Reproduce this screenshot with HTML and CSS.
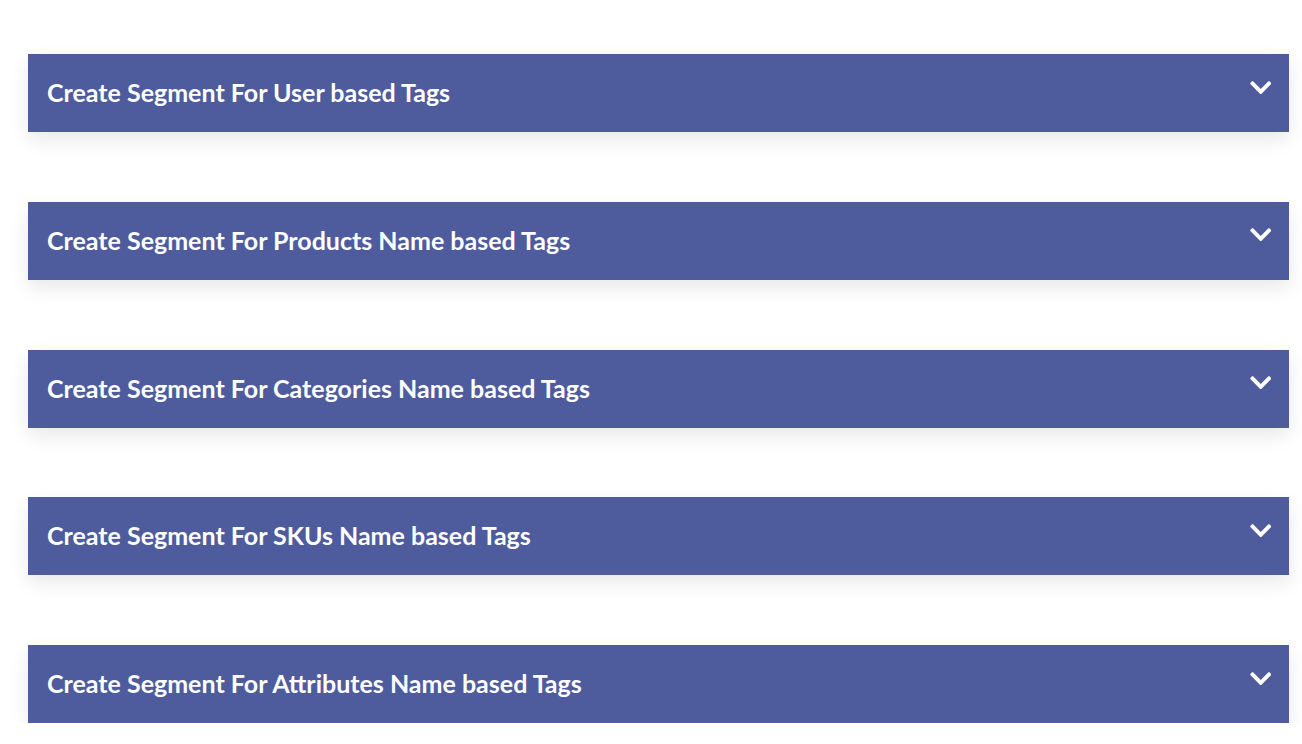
FILE: index.html
```html
<!DOCTYPE html>
<html lang="en">
<head>
    <meta charset="UTF-8">
    <meta name="viewport" content="width=device-width, initial-scale=1.0">
    <title>Segments</title>
    <link rel="stylesheet" href="styles.css">
</head>
<body>
    <div class="segments">
        <div class="seg-bar">
            <span class="seg-title">Create Segment For User based Tags</span>
            <svg class="seg-arrow" viewBox="0 118 448 276"><path d="M207.029 381.476L12.686 187.132c-9.373-9.373-9.373-24.569 0-33.941l22.667-22.667c9.357-9.357 24.522-9.375 33.901-.04L224 284.505l154.745-154.021c9.379-9.335 24.544-9.317 33.901.04l22.667 22.667c9.373 9.373 9.373 24.569 0 33.941L240.971 381.476c-9.373 9.372-24.569 9.372-33.942 0z"/></svg>
        </div>
        <div class="seg-bar">
            <span class="seg-title">Create Segment For Products Name based Tags</span>
            <svg class="seg-arrow" viewBox="0 118 448 276"><path d="M207.029 381.476L12.686 187.132c-9.373-9.373-9.373-24.569 0-33.941l22.667-22.667c9.357-9.357 24.522-9.375 33.901-.04L224 284.505l154.745-154.021c9.379-9.335 24.544-9.317 33.901.04l22.667 22.667c9.373 9.373 9.373 24.569 0 33.941L240.971 381.476c-9.373 9.372-24.569 9.372-33.942 0z"/></svg>
        </div>
        <div class="seg-bar">
            <span class="seg-title">Create Segment For Categories Name based Tags</span>
            <svg class="seg-arrow" viewBox="0 118 448 276"><path d="M207.029 381.476L12.686 187.132c-9.373-9.373-9.373-24.569 0-33.941l22.667-22.667c9.357-9.357 24.522-9.375 33.901-.04L224 284.505l154.745-154.021c9.379-9.335 24.544-9.317 33.901.04l22.667 22.667c9.373 9.373 9.373 24.569 0 33.941L240.971 381.476c-9.373 9.372-24.569 9.372-33.942 0z"/></svg>
        </div>
        <div class="seg-bar">
            <span class="seg-title">Create Segment For SKUs Name based Tags</span>
            <svg class="seg-arrow" viewBox="0 118 448 276"><path d="M207.029 381.476L12.686 187.132c-9.373-9.373-9.373-24.569 0-33.941l22.667-22.667c9.357-9.357 24.522-9.375 33.901-.04L224 284.505l154.745-154.021c9.379-9.335 24.544-9.317 33.901.04l22.667 22.667c9.373 9.373 9.373 24.569 0 33.941L240.971 381.476c-9.373 9.372-24.569 9.372-33.942 0z"/></svg>
        </div>
        <div class="seg-bar">
            <span class="seg-title">Create Segment For Attributes Name based Tags</span>
            <svg class="seg-arrow" viewBox="0 118 448 276"><path d="M207.029 381.476L12.686 187.132c-9.373-9.373-9.373-24.569 0-33.941l22.667-22.667c9.357-9.357 24.522-9.375 33.901-.04L224 284.505l154.745-154.021c9.379-9.335 24.544-9.317 33.901.04l22.667 22.667c9.373 9.373 9.373 24.569 0 33.941L240.971 381.476c-9.373 9.372-24.569 9.372-33.942 0z"/></svg>
        </div>
    </div>
</body>
</html>
```

FILE: styles.css
```css
body {
    margin: 0;
    padding: 0;
    background-color: #fff;
    font-family: Lato, "Liberation Sans", sans-serif;
}
.segments {
    display: flex;
    flex-direction: column;
    gap: 69.75px;
    padding: 54px 13px 0 28px;
}
.seg-bar {
    display: flex;
    justify-content: space-between;
    align-items: flex-start;
    height: 78px;
    box-sizing: border-box;
    padding: 0 18px 0 19px;
    background-color: #4e5b9d;
    box-shadow: 0 8px 18px rgba(0, 0, 0, 0.09);
}
.seg-title {
    color: #fff;
    font-size: 25px;
    font-weight: 700;
    line-height: 77px;
}
.seg-arrow {
    width: 21.5px;
    height: 13.25px;
    margin-top: 26.5px;
    fill: #fff;
}
```
